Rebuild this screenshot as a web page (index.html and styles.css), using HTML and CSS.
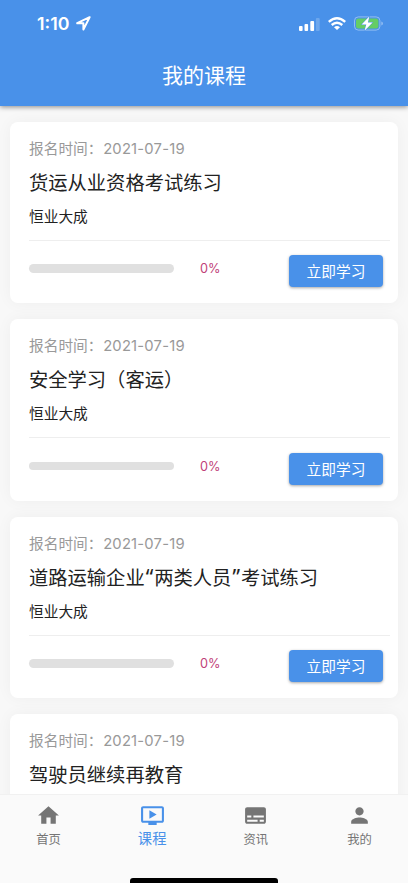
FILE: index.html
```html
<!DOCTYPE html>
<html lang="zh-CN">
<head>
<meta charset="utf-8">
<meta name="viewport" content="width=device-width, initial-scale=1">
<title>我的课程</title>
<link rel="stylesheet" href="styles.css">
</head>
<body>
<div class="app">
  <header class="header">
    <div class="status">
      <span class="clock">1:10</span>
      <svg class="location" width="15" height="15" viewBox="0 0 15 15"><path d="M13.6 1.2 L1.2 7.2 H7.4 V13.6 Z" fill="none" stroke="#fff" stroke-width="2" stroke-linejoin="round"/></svg>
      <svg class="signal" width="21" height="13" viewBox="0 0 21 13" fill="#fff"><rect x="0" y="8" width="3.6" height="5" rx="1"/><rect x="5.5" y="6" width="3.6" height="7" rx="1"/><rect x="11.3" y="3" width="3.8" height="10" rx="1"/><rect x="16.9" y="0" width="3.8" height="13" rx="1" opacity=".2"/></svg>
      <svg class="wifi" width="18" height="13" viewBox="0 0 18 13"><g fill="none" stroke="#fff" stroke-width="2.4"><path d="M.8 4.9 Q9 -2.3 17.2 4.9"/><path d="M3.7 8 Q9 3.4 14.3 8"/></g><path d="M6 10.2 Q9 7.8 12 10.2 L9 13 Z" fill="#fff"/></svg>
      <svg class="battery" width="30" height="15" viewBox="0 0 30 15"><rect x=".5" y=".9" width="25.4" height="13.2" rx="3.8" fill="none" stroke="#fff" stroke-opacity=".4"/><path d="M27.3 5.4 Q29 6 29 7.5 T27.3 9.6Z" fill="#fff" opacity=".4"/><rect x="2" y="2.4" width="22.4" height="10.2" rx="2.3" fill="#65cd66"/><path d="M15.3 .4 L7.6 8.5 H12.3 L10.5 14.8 L18.6 6.5 H13.9 Z" fill="#fff" stroke="#4991e9" stroke-width="1" paint-order="stroke"/></svg>
    </div>
    <h1 class="title">我的课程</h1>
  </header>
  <main class="courses">
    <article class="card">
      <div class="date">报名时间：<span class="day">2021-07-19</span></div>
      <h2 class="name">货运从业资格考试练习</h2>
      <div class="org">恒业大成</div>
      <div class="progress"><div class="track"></div><span class="percent">0%</span><button class="study">立即学习</button></div>
    </article>
    <article class="card">
      <div class="date">报名时间：<span class="day">2021-07-19</span></div>
      <h2 class="name">安全学习（客运）</h2>
      <div class="org">恒业大成</div>
      <div class="progress"><div class="track"></div><span class="percent">0%</span><button class="study">立即学习</button></div>
    </article>
    <article class="card">
      <div class="date">报名时间：<span class="day">2021-07-19</span></div>
      <h2 class="name">道路运输企业<span class="quote">“</span>两类人员<span class="quote">”</span>考试练习</h2>
      <div class="org">恒业大成</div>
      <div class="progress"><div class="track"></div><span class="percent">0%</span><button class="study">立即学习</button></div>
    </article>
    <article class="card">
      <div class="date">报名时间：<span class="day">2021-07-19</span></div>
      <h2 class="name">驾驶员继续再教育</h2>
    </article>
  </main>
  <nav class="tabs">
    <a class="tab"><svg width="25" height="25" viewBox="0 0 24 24"><path d="M10 20v-6h4v6h5v-8h3L12 3 2 12h3v8z"/></svg><span>首页</span></a>
    <a class="tab active"><svg width="25" height="25" viewBox="0 0 24 24"><path d="M21 3H3c-1.11 0-2 .89-2 2v12c0 1.1.89 2 2 2h5v2h8v-2h5c1.1 0 1.99-.9 1.99-2L23 5c0-1.11-.9-2-2-2zm0 14H3V5h18v12zm-5-6l-7 4V7z"/></svg><span>课程</span></a>
    <a class="tab"><svg width="25" height="25" viewBox="0 0 24 24"><path d="M20 4H4c-1.1 0-2 .9-2 2v12c0 1.1.9 2 2 2h16c1.1 0 2-.9 2-2V6c0-1.1-.9-2-2-2zM4 12h4v2H4v-2zm10 6H4v-2h10v2zm6 0h-4v-2h4v2zm0-4H10v-2h10v2z"/></svg><span>资讯</span></a>
    <a class="tab"><svg width="25" height="25" viewBox="0 0 24 24"><path d="M12 12c2.21 0 4-1.79 4-4s-1.79-4-4-4-4 1.79-4 4 1.79 4 4 4zm0 2c-2.67 0-8 1.34-8 4v2h16v-2c0-2.66-5.33-4-8-4z"/></svg><span>我的</span></a>
    <div class="home-bar"></div>
  </nav>
</div>
</body>
</html>
```
FILE: styles.css
```css
* { box-sizing: border-box; }
body { margin: 0; font-family: "Noto Sans CJK SC", sans-serif; background: #f8f8f8; }
.app { height: 883px; display: flex; flex-direction: column; overflow: hidden; }
.header { flex: none; height: 105.5px; background: #4991e9; color: #fff; box-shadow: 0 1px 5px rgba(0,0,0,.45); z-index: 1; }
.status { height: 47px; padding: 0 24px 0 37px; display: flex; align-items: center; }
.clock { font: 600 17.8px/20px Inter, sans-serif; width: 34px; white-space: nowrap; }
.location { margin-left: 5px; }
.signal { margin-left: auto; margin-top: 1px; }
.wifi { margin-left: 8px; }
.battery { margin-left: 8px; }
.title { margin: 12px 0 0; font-size: 21px; line-height: 31px; font-weight: 400; text-align: center; }
.courses { flex: 1; min-height: 0; overflow: hidden; padding: 16px 10px 0; display: flex; flex-direction: column; gap: 16px; }
.card { flex: none; height: 181.5px; border-radius: 8px; background: #fff; padding: 15px 8px 0 19px; box-shadow: 0 0 16px rgba(0,0,0,.045); }
.date { font-size: 14.7px; line-height: 22px; color: #999; }
.day { font-family: Inter, sans-serif; font-size: 14.8px; letter-spacing: .2px; margin-left: .7px; }
.name { margin: 8px 0 0; font-size: 19.3px; line-height: 29px; font-weight: 400; color: #222; white-space: nowrap; }
.quote { display: inline-block; width: 9.6px; text-align: center; font-family: "Noto Sans", sans-serif; font-size: 21px; line-height: 20px; }
.org { margin-top: 8px; height: 36px; font-size: 14.7px; line-height: 22px; color: #222; border-bottom: 1px solid #eee; }
.progress { display: flex; align-items: flex-start; padding: 14.5px 7px 0 0; }
.track { width: 145px; height: 8.5px; border-radius: 5px; background: #e0e0e0; margin-top: 9px; }
.percent { margin: 5px 0 0 26px; font: 12.7px/17px Inter, sans-serif; color: #bf4278; }
.study { margin-left: auto; width: 94px; height: 32px; padding: 0; border: 0; border-radius: 4px; background: #4991e9; color: #fff; font: 14.7px/30px "Noto Sans CJK SC", sans-serif; box-shadow: 0 1px 3px rgba(0,0,0,.35); }
.tabs { flex: none; height: 89px; display: flex; position: relative; background: #fafafa; border-top: 1px solid #f1f1f1; z-index: 1; justify-content: space-between; }
.tab { width: 97px; display: flex; flex-direction: column; align-items: center; padding-top: 7.5px; color: #757575; font-size: 12.3px; line-height: 18px; }
.tab svg { fill: currentColor; }
.tab span { margin-top: 2px; }
.tab.active { color: #4991e9; font-size: 14.3px; }
.tab.active span { margin-top: 1px; }
.home-bar { position: absolute; left: 130px; bottom: 0; width: 148px; height: 5px; border-radius: 3px 3px 0 0; background: #000; }
```
